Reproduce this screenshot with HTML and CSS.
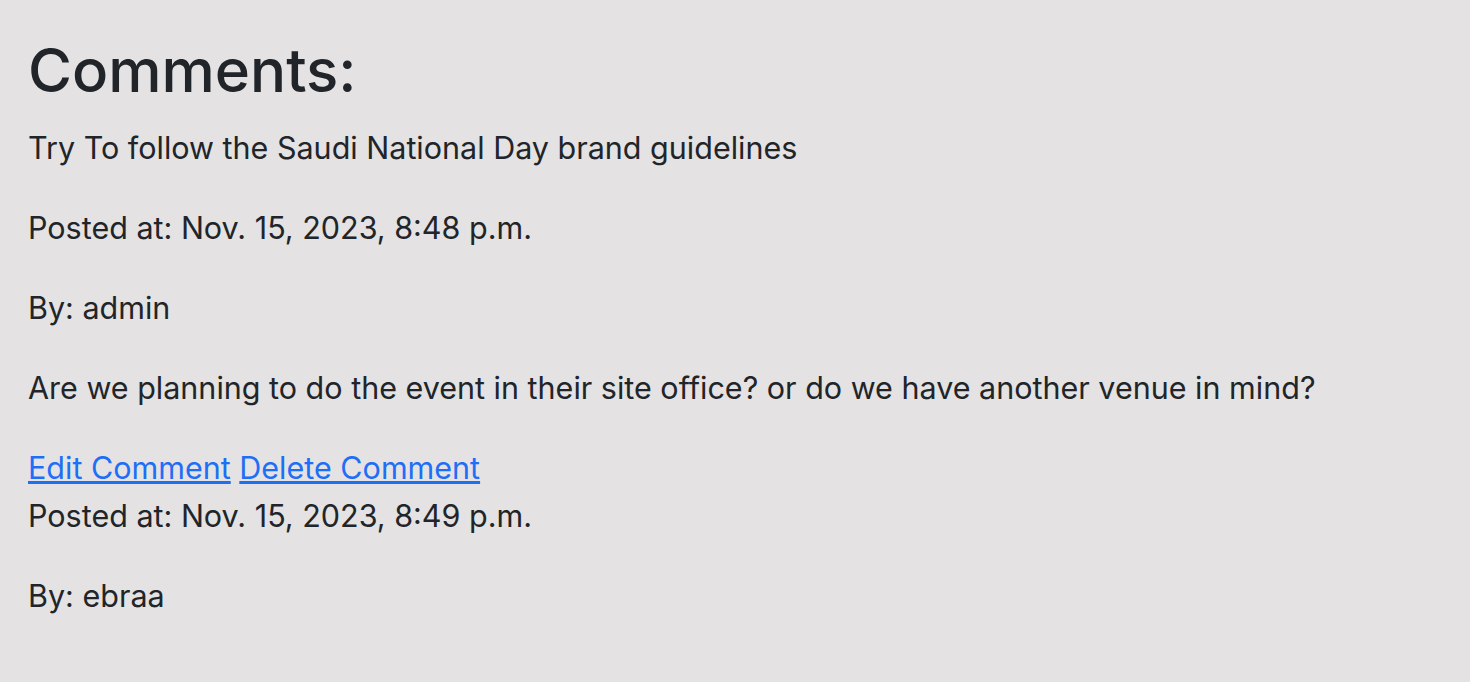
FILE: index.html
```html
<!DOCTYPE html>
<html lang="en">
<head>
<meta charset="utf-8">
<title>Comments</title>
<link rel="stylesheet" href="styles.css">
</head>
<body>
<main class="page">
  <h1 class="title">Comments:</h1>
  <p class="text">Try To follow the Saudi National Day brand guidelines</p>
  <p class="text">Posted at: Nov. 15, 2023, 8:48 p.m.</p>
  <p class="text">By: admin</p>
  <p class="text">Are we planning to do the event in their site office? or do we have another venue in mind?</p>
  <a class="link" href="#">Edit Comment</a> <a class="link" href="#">Delete Comment</a>
  <p class="text">Posted at: Nov. 15, 2023, 8:49 p.m.</p>
  <p class="text">By: ebraa</p>
</main>
</body>
</html>
```
FILE: styles.css
```css
html, body {
  margin: 0;
  padding: 0;
  background: #e4e2e3;
}
body {
  font-family: Inter, "Noto Sans", sans-serif;
  color: #212529;
  font-size: 30.5px;
  line-height: 48px;
}
.page {
  padding: 34px 28px;
}
.title {
  margin: 0 0 18px;
  font-size: 60px;
  line-height: 72px;
  font-weight: 500;
}
.text {
  margin: 0 0 32px;
}
.link {
  color: #1f6ef6;
  text-decoration: underline;
}
```
